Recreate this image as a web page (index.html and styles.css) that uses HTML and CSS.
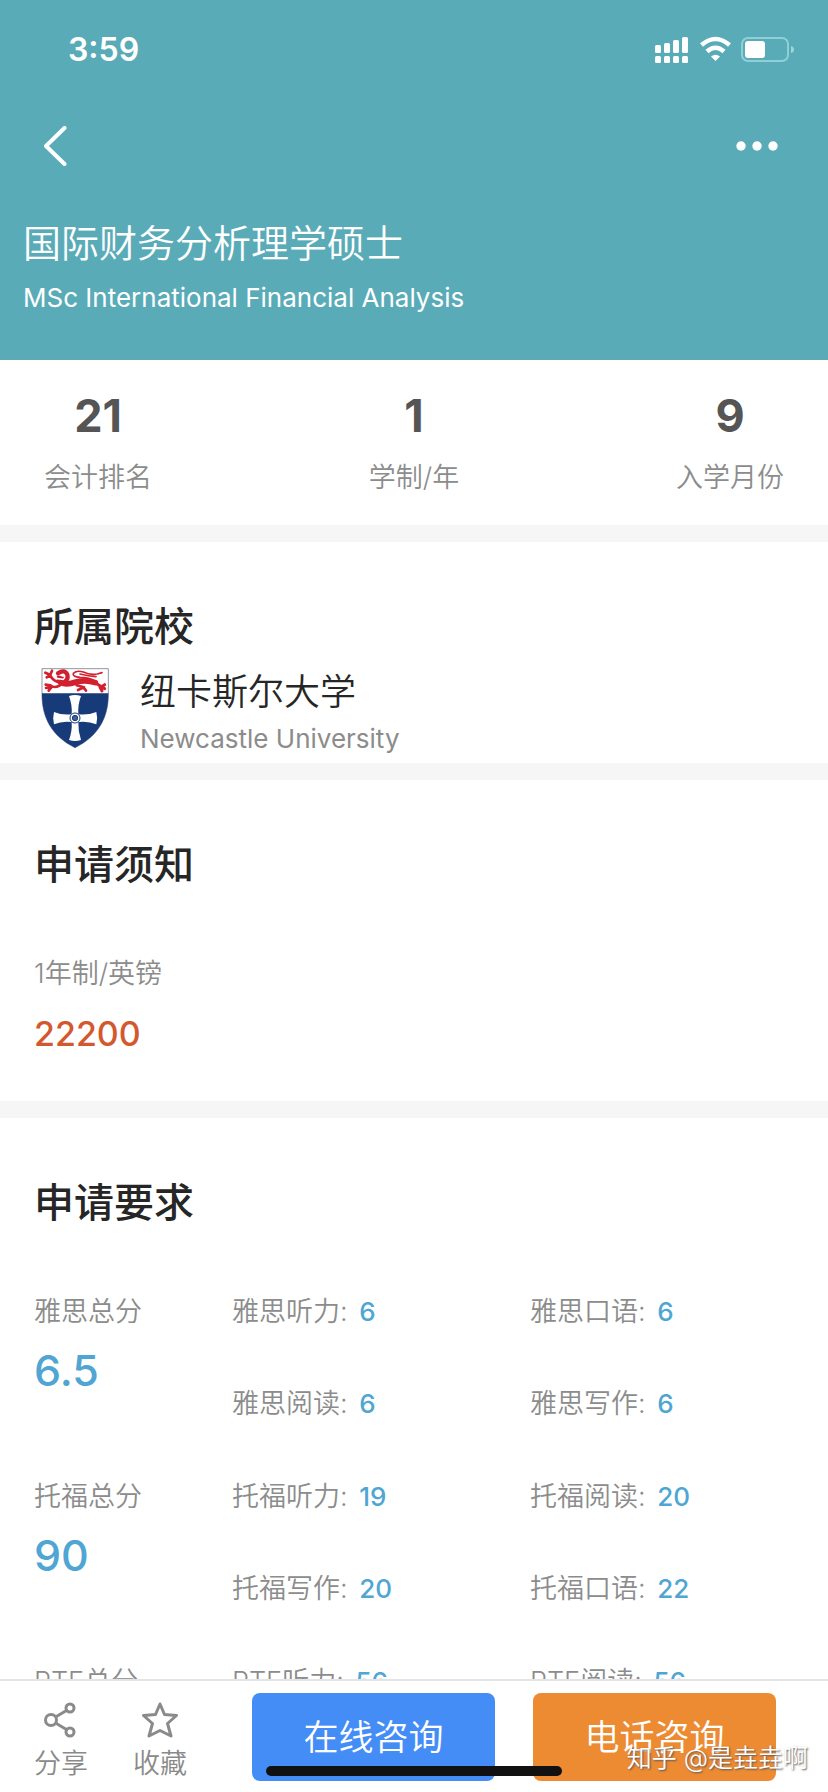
FILE: index.html
```html
<!DOCTYPE html>
<html lang="zh-CN">
<head>
    <meta charset="UTF-8" />
    <meta name="viewport" content="width=device-width, initial-scale=1.0" />
    <title>国际财务分析理学硕士</title>
    <link rel="stylesheet" href="styles.css">
</head>
<body>

<header class="top">
    <div class="status-bar">
        <span class="time">3:59</span>
        <svg class="status-icons" width="140" height="28" viewBox="0 0 140 28" aria-hidden="true">
            <g fill="#fff">
                <rect x="0" y="9" width="6" height="8" rx="1.5"/>
                <rect x="9" y="7" width="6" height="10" rx="1.5"/>
                <rect x="18" y="4" width="6" height="13" rx="1.5"/>
                <rect x="27" y="1" width="6" height="16" rx="1.5"/>
                <rect x="0" y="20" width="6" height="7" rx="1.5"/>
                <rect x="9" y="20" width="6" height="7" rx="1.5"/>
                <rect x="18" y="20" width="6" height="7" rx="1.5"/>
                <rect x="27" y="20" width="6" height="7" rx="1.5"/>
                <path d="M60.500 25 L56 20.500 Q60.500 17 65 20.500 Z"/>
                <rect x="90" y="5" width="20" height="17" rx="3"/>
            </g>
            <path d="M46.500 9 Q60.500 -3 74.500 9 M52 15.500 Q60.500 8 69 15.500" fill="none" stroke="#fff" stroke-width="4.500"/>
            <rect x="87" y="2" width="46" height="23" rx="6" fill="none" stroke="#8fd0d8" stroke-width="2"/>
            <path d="M136 10 Q139 11 139 13.500 Q139 16 136 17 Z" fill="#9fd6dc"/>
        </svg>
    </div>
    <div class="nav-bar">
        <button class="icon-btn" aria-label="返回">
            <svg width="24" height="40" viewBox="0 0 24 40"><path d="M21.500 2 L3 20 L21.500 38" fill="none" stroke="#fff" stroke-width="4" stroke-linecap="round" stroke-linejoin="round"/></svg>
        </button>
        <button class="icon-btn" aria-label="更多">
            <svg width="42" height="10" viewBox="0 0 42 10" fill="#fff"><circle cx="5" cy="5" r="4.700"/><circle cx="21" cy="5" r="4.700"/><circle cx="37" cy="5" r="4.700"/></svg>
        </button>
    </div>
    <h1>国际财务分析理学硕士</h1>
    <p class="subtitle">MSc International Financial Analysis</p>
</header>

<main class="content">
    <section class="stats">
        <div class="stat"><strong>21</strong><span>会计排名</span></div>
        <div class="stat"><strong>1</strong><span>学制/年</span></div>
        <div class="stat"><strong>9</strong><span>入学月份</span></div>
    </section>

    <section class="block school-block">
        <h2>所属院校</h2>
        <div class="school">
            <svg class="crest" width="68" height="80" viewBox="33 32 204 240" aria-hidden="true">
                <path d="M36 34 H235 V112 C235 180 205 237 135 271 C65 237 36 180 36 112 Z" fill="#fff" stroke="#59627a" stroke-width="2"/>
                <path d="M36 108 H235 C236 178 206 237 135 271 C64 237 35 178 36 108 Z" fill="#173a78"/>
                <!-- lion -->
                <g fill="none" stroke="#d3202f" stroke-linecap="round" stroke-linejoin="round">
                    <path d="M92 76 Q110 84 138 74 Q168 66 196 76" stroke-width="17"/>
                    <path d="M84 48 Q104 34 112 52 Q116 66 102 76" stroke-width="13"/>
                    <path d="M84 58 L98 60 M82 70 L98 72" stroke-width="7"/>
                    <path d="M90 84 Q72 94 62 84 M60 84 L47 82 M62 88 L48 92 M64 90 L56 100" stroke-width="8"/>
                    <path d="M84 74 Q66 68 60 52 M60 52 L46 46 M60 54 L50 60 M62 50 L66 40" stroke-width="8"/>
                    <path d="M140 84 L162 90 L144 98 M162 92 L168 100" stroke-width="8"/>
                    <path d="M196 76 L214 88 L224 82 M212 88 L224 94 M210 90 L216 101" stroke-width="9"/>
                    <path d="M196 72 Q178 60 150 60 Q126 58 130 48 Q140 38 160 44 Q180 54 202 50 L216 46 M150 50 Q176 56 198 58" stroke-width="5"/>
                </g>
                <circle cx="97" cy="55" r="3" fill="#fff"/>
                <!-- cross -->
                <path d="M117 116 Q135 110 153 116 Q143 142 145 171 Q174 174 199 164 Q204 182 199 201 Q174 190 145 194 Q144 222 153 248 Q135 254 117 248 Q127 222 125 194 Q96 190 72 201 Q67 182 72 164 Q96 174 125 171 Q127 142 117 116 Z" fill="#fff"/>
                <circle cx="135" cy="182" r="15" fill="#fff" stroke="#173a78" stroke-width="3"/>
                <circle cx="135" cy="182" r="8" fill="#3d6098" stroke="#173a78" stroke-width="3"/>
            </svg>
            <div class="school-text">
                <p class="school-name">纽卡斯尔大学</p>
                <p class="school-en">Newcastle University</p>
            </div>
        </div>
    </section>

    <section class="block fee-block">
        <h2>申请须知</h2>
        <p class="label">1年制/英镑</p>
        <p class="fee">22200</p>
    </section>

    <section class="block">
        <h2>申请要求</h2>
        <div class="scores">
            <div class="total"><span>雅思总分</span><strong>6.5</strong></div>
            <div class="parts">
                <p>雅思听力: <b>6</b></p>
                <p>雅思口语: <b>6</b></p>
                <p>雅思阅读: <b>6</b></p>
                <p>雅思写作: <b>6</b></p>
            </div>
        </div>
        <div class="scores">
            <div class="total"><span>托福总分</span><strong>90</strong></div>
            <div class="parts">
                <p>托福听力: <b>19</b></p>
                <p>托福阅读: <b>20</b></p>
                <p>托福写作: <b>20</b></p>
                <p>托福口语: <b>22</b></p>
            </div>
        </div>
        <div class="scores">
            <div class="total"><span>PTE总分</span></div>
            <div class="parts">
                <p>PTE听力: <b>56</b></p>
                <p>PTE阅读: <b>56</b></p>
            </div>
        </div>
    </section>
</main>

<footer class="action-bar">
    <button class="action">
        <svg width="36" height="36" viewBox="0 0 36 36" fill="none" stroke="#8a8a8a" stroke-width="3"><circle cx="8" cy="18" r="5.500"/><circle cx="27" cy="6" r="4"/><circle cx="27" cy="30" r="4"/><path d="M12.500 15 L23.500 8.500 M12.500 21 L23.500 27.500"/></svg>
        分享
    </button>
    <button class="action">
        <svg width="36" height="36" viewBox="0 0 36 36" fill="none" stroke="#8a8a8a" stroke-width="3" stroke-linejoin="round"><path d="M18 2 L22.500 12.500 L34.500 13.500 L25.500 21.500 L29 34 L18 28.500 L7 34 L10.500 21.500 L1.500 13.500 L13.500 12.500 Z"/></svg>
        收藏
    </button>
    <div class="consult">
        <button class="consult-btn online">在线咨询</button>
        <button class="consult-btn phone">电话咨询</button>
    </div>
    <div class="home-indicator"></div>
    <span class="watermark">知乎 @是垚垚啊</span>
</footer>

</body>
</html>
```
FILE: styles.css
```css
* {
    box-sizing: border-box;
}
body {
    margin: 0;
    height: 100vh;
    display: flex;
    flex-direction: column;
    overflow: hidden;
    background-color: #fff;
    color: #8c8c8c;
    font-family: Inter, "Noto Sans CJK SC", sans-serif;
    font-size: 27px;
    font-weight: 350;
    line-height: 40px;
}
h1, h2, p {
    margin: 0;
}
button {
    font: inherit;
    border: none;
    padding: 0;
    background: none;
    cursor: pointer;
}
svg {
    display: block;
}

/* header */
.top {
    flex: none;
    padding: 30px 23px 42px;
    background-color: #5aabb8;
    color: #fff;
}
.status-bar {
    display: flex;
    justify-content: space-between;
    align-items: center;
    padding: 0 10px 0 45px;
}
.time {
    font-size: 32px;
    font-weight: 600;
}
.nav-bar {
    display: flex;
    justify-content: space-between;
    align-items: center;
    padding: 56px 27px 0 20px;
}
.top h1 {
    margin-top: 52px;
    font-size: 38px;
    font-weight: 350;
    line-height: 50px;
}
.subtitle {
    margin-top: 10px;
    font-size: 26px;
    font-weight: 400;
}

/* page content */
.content {
    flex: 1;
    min-height: 0;
    overflow-y: auto;
    scrollbar-width: none;
}
.stats {
    display: flex;
    justify-content: space-between;
    padding: 31px 44px 27px;
}
.stat {
    display: flex;
    flex-direction: column;
    align-items: center;
    gap: 17px;
}
.stat strong {
    color: #555;
    font-size: 45px;
    font-weight: 700;
    line-height: 50px;
}
.block {
    padding: 55px 34px 0;
    border-top: 17px solid #f6f6f6;
}
.block h2 {
    color: #262626;
    font-size: 40px;
    font-weight: 500;
    line-height: 60px;
}
.school-block {
    padding-bottom: 4px;
}
.school {
    display: flex;
    align-items: center;
    gap: 31px;
    padding-left: 7px;
}
.school-text {
    padding-top: 8px;
}
.school-name {
    color: #262626;
    font-size: 36px;
    line-height: 54px;
}
.school-en {
    font-size: 26px;
    font-weight: 400;
}
.fee-block {
    padding-bottom: 47px;
}
.label {
    margin-top: 59px;
}
.fee {
    margin-top: 20px;
    color: #d4582f;
    font-size: 34px;
    font-weight: 500;
}
.scores {
    display: grid;
    grid-template-columns: 198fr 562fr;
    margin-top: 53px;
}
h2 + .scores {
    margin-top: 59px;
}
.total {
    display: flex;
    flex-direction: column;
    gap: 13px;
}
.total strong {
    color: #4fa6d2;
    font-size: 43px;
    font-weight: 500;
    line-height: 50px;
}
.parts {
    display: grid;
    grid-template-columns: 298fr 264fr;
    row-gap: 52px;
}
.parts b {
    margin-left: 4px;
    color: #4fa6d2;
    font-size: 26px;
    font-weight: 500;
}

/* bottom bar */
.action-bar {
    flex: none;
    position: relative;
    display: flex;
    align-items: flex-start;
    gap: 45px;
    padding: 12px 52px 8px 34px;
    border-top: 2px solid #e4e4e6;
}
.action {
    display: flex;
    flex-direction: column;
    align-items: center;
    gap: 6px;
    padding-top: 9px;
    color: #8a8a8a;
}
.consult {
    flex: 1;
    display: flex;
    gap: 38px;
    margin-left: 20px;
}
.consult-btn {
    flex: 1;
    height: 88px;
    border-radius: 8px;
    color: #fff;
    font-size: 35px;
}
.online {
    background-color: #458df6;
}
.phone {
    background-color: #ed8b33;
}
.home-indicator {
    position: absolute;
    left: 50%;
    bottom: 16px;
    width: 296px;
    height: 10px;
    margin-left: -148px;
    border-radius: 5px;
    background-color: #111;
}
.watermark {
    position: absolute;
    right: 20px;
    bottom: 14px;
    color: #fff;
    font-size: 25px;
    font-weight: 350;
    text-shadow: 1px 1px 2px #555;
}
```
